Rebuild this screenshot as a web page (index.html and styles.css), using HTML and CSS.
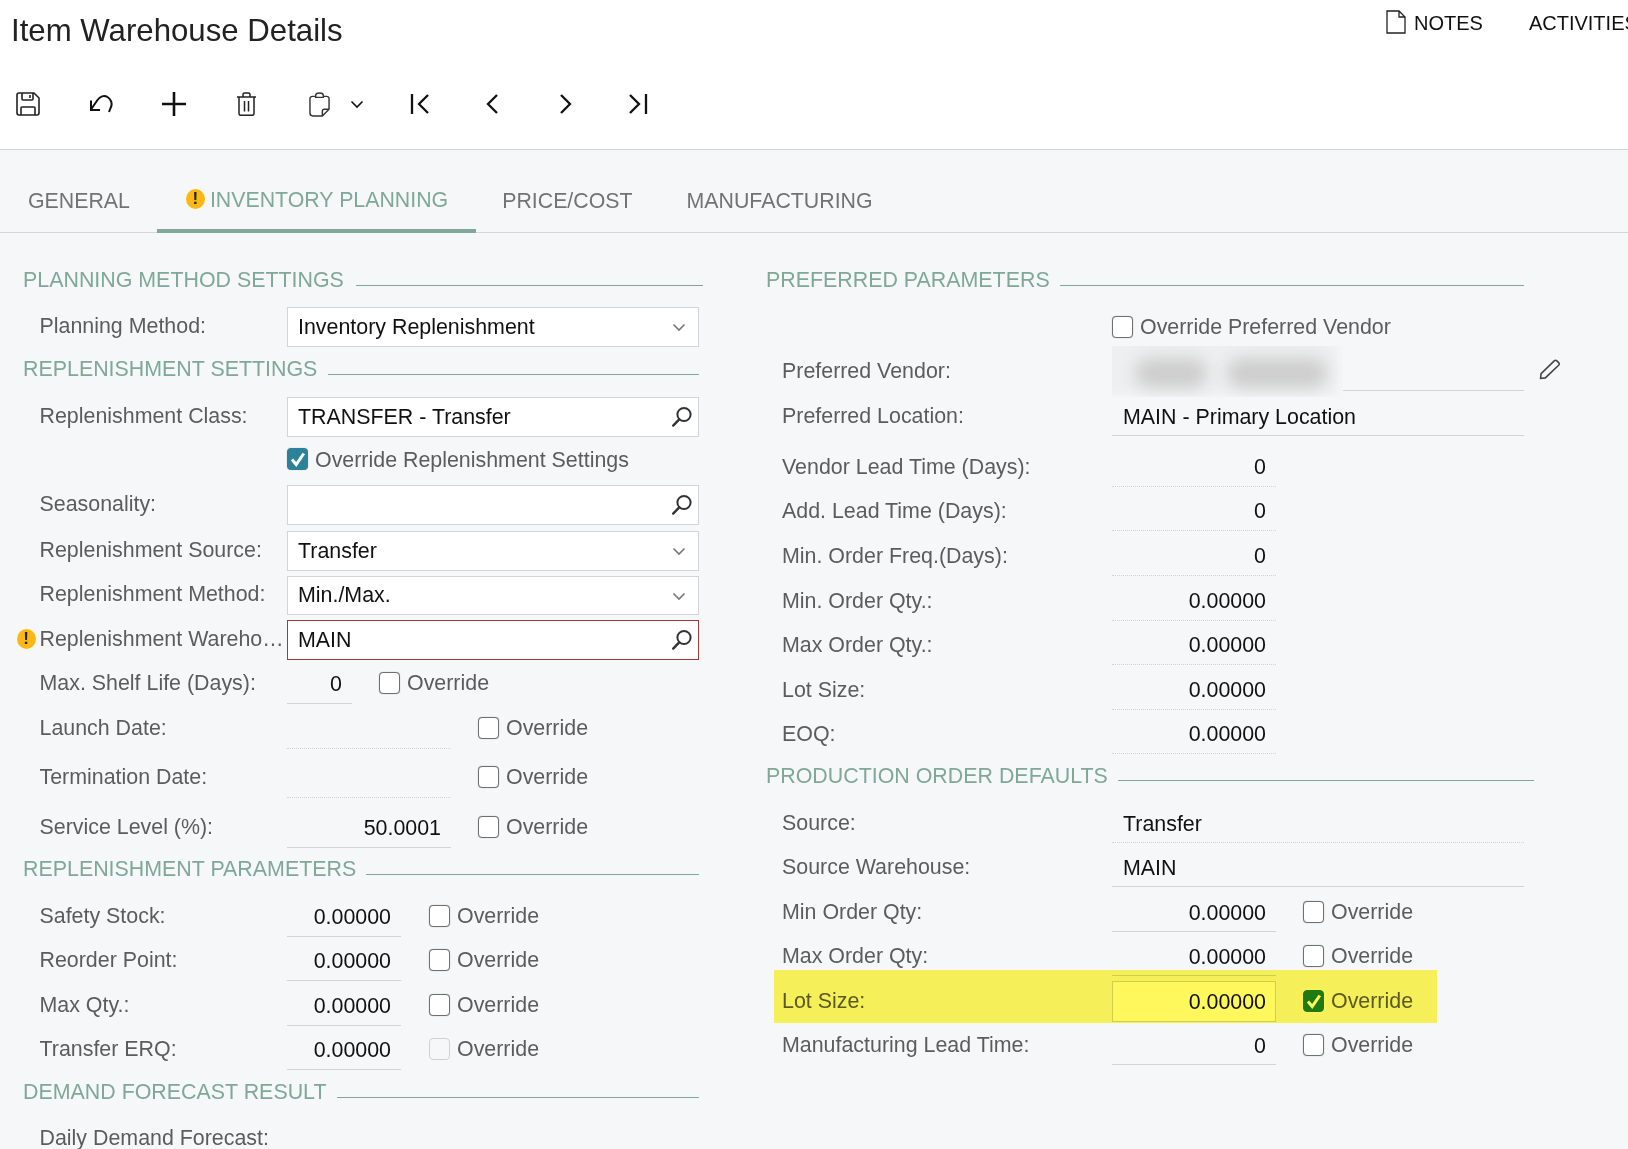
FILE: index.html
```html
<!DOCTYPE html>
<html lang="en">
<head>
<meta charset="utf-8">
<title>Item Warehouse Details</title>
<link rel="stylesheet" href="styles.css">
</head>
<body>
<svg class="defs" width="0" height="0" aria-hidden="true">
  <symbol id="chev" viewBox="0 0 14 9"><path d="M1.5 1.5 7 7l5.5-5.5" fill="none" stroke="currentColor" stroke-width="1.6"/></symbol>
  <symbol id="search" viewBox="0 0 22 22"><circle cx="13" cy="8.5" r="6.6" fill="none" stroke="currentColor" stroke-width="2"/><path d="M8.2 13.4 2.2 19.6" fill="none" stroke="currentColor" stroke-width="2.4" stroke-linecap="round"/></symbol>
  <symbol id="check" viewBox="0 0 22 22"><path d="M5 11.500 9.200 16.500 16.800 5.500" fill="none" stroke="currentColor" stroke-width="3"/></symbol>
</svg>

<header class="header">
  <div class="title-row">
    <h1 class="title">Item Warehouse Details</h1>
    <div class="links">
      <span class="link link-notes">
        <svg class="note-icon" viewBox="0 0 20 24"><path d="M1 1h12l6 6v16H1z M13 1v6h6" fill="#fff" stroke="#222" stroke-width="1.3"/></svg>
        NOTES
      </span>
      <span class="link">ACTIVITIES</span>
    </div>
  </div>
  <div class="toolbar">
    <button class="tool tool-save"><svg viewBox="0 0 24 24" class="ico"><path d="M3 1h15l5 5v15a2 2 0 0 1-2 2H3a2 2 0 0 1-2-2V3a2 2 0 0 1 2-2z M6 1v6a1 1 0 0 0 1 1h9a1 1 0 0 0 1-1V1 M14 3v3 M5 23v-7a1 1 0 0 1 1-1h12a1 1 0 0 1 1 1v7" fill="none" stroke="#222" stroke-width="1.6"/></svg></button>
    <button class="tool"><svg viewBox="0 0 24 24" class="ico"><path d="M2 8.500V18h9M2 17.500 8.500 8C11 4.500 15 3 18.500 5c3.500 2 5 6.500 3.500 10l-2 5" fill="none" stroke="#111" stroke-width="2"/></svg></button>
    <button class="tool"><svg viewBox="0 0 24 24" class="ico"><path d="M12 0v24M0 12h24" fill="none" stroke="#111" stroke-width="2.6"/></svg></button>
    <button class="tool"><svg viewBox="0 0 19 24" class="ico-trash"><path d="M0 5h19M6 5V2.500A1.500 1.500 0 0 1 7.500 1h4A1.500 1.500 0 0 1 13 2.500V5M2 5v16.500A1.800 1.800 0 0 0 3.800 23.300h11.400a1.800 1.800 0 0 0 1.800-1.800V5M7.500 9v10.500M11.500 9v10.500" fill="none" stroke="#222" stroke-width="1.5"/></svg></button>
    <button class="tool tool-clip"><svg viewBox="0 0 22 26" class="ico ico-tall"><path d="M7 4.500H3.500A2.500 2.500 0 0 0 1 7v15a3 3 0 0 0 3 3h10l7-7V7a2.500 2.500 0 0 0-2.500-2.500H15M7 5.500V3.500C7 2 9 1 11 1s4 1 4 2.500v2zM14 25v-5a2 2 0 0 1 2-2h5" fill="none" stroke="#333" stroke-width="1.5"/></svg><svg class="ico-chev"><use href="#chev"/></svg></button>
    <button class="tool tool-nav"><svg viewBox="0 0 20 20" class="ico-nav"><path d="M2 0v20M18 1 9 10l9 9" fill="none" stroke="#111" stroke-width="2.3"/></svg></button>
    <button class="tool tool-nav"><svg viewBox="0 0 20 20" class="ico-nav"><path d="M14 1 5 10l9 9" fill="none" stroke="#111" stroke-width="2.3"/></svg></button>
    <button class="tool tool-nav"><svg viewBox="0 0 20 20" class="ico-nav"><path d="M5 1l9 9-9 9" fill="none" stroke="#111" stroke-width="2.300"/></svg></button>
    <button class="tool tool-nav"><svg viewBox="0 0 20 20" class="ico-nav"><path d="M17 0v20M1 1l9 9-9 9" fill="none" stroke="#111" stroke-width="2.3"/></svg></button>
  </div>
</header>

<nav class="tabs">
  <a class="tab">GENERAL</a>
  <a class="tab tab-active"><span class="warn">!</span>INVENTORY PLANNING</a>
  <a class="tab tab-after">PRICE/COST</a>
  <a class="tab">MANUFACTURING</a>
</nav>

<main class="form">
  <section class="col col-left">
    <div class="head head-first head-wide"><span>PLANNING METHOD SETTINGS</span><i></i></div>
    <div class="row h40"><label class="lbl">Planning Method:</label><div class="box">Inventory Replenishment<svg class="chev"><use href="#chev"/></svg></div></div>

    <div class="head"><span>REPLENISHMENT SETTINGS</span><i></i></div>
    <div class="row h41"><label class="lbl">Replenishment Class:</label><div class="box">TRANSFER - Transfer<svg class="mag"><use href="#search"/></svg></div></div>
    <div class="row h43"><span class="lbl"></span><span class="cb cb-on"><svg><use href="#check"/></svg></span><span class="cbt cbt-low">Override Replenishment Settings</span></div>
    <div class="row h45"><label class="lbl">Seasonality:</label><div class="box"><svg class="mag"><use href="#search"/></svg></div></div>
    <div class="row h46"><label class="lbl">Replenishment Source:</label><div class="box">Transfer<svg class="chev"><use href="#chev"/></svg></div></div>
    <div class="row h44"><label class="lbl">Replenishment Method:</label><div class="box box-short">Min./Max.<svg class="chev"><use href="#chev"/></svg></div></div>
    <div class="row h45"><label class="lbl lbl-warn"><span class="warn warn-lbl">!</span><span class="lbl-cut">Replenishment Warehouse:</span></label><div class="box box-err">MAIN<svg class="mag"><use href="#search"/></svg></div></div>
    <div class="row h44"><label class="lbl">Max. Shelf Life (Days):</label><div class="fld w65">0</div><span class="cb"></span><span class="cbt">Override</span></div>
    <div class="row h45"><label class="lbl">Launch Date:</label><div class="fld w164 dot"></div><span class="cb"></span><span class="cbt">Override</span></div>
    <div class="row h49"><label class="lbl">Termination Date:</label><div class="fld w164 dot"></div><span class="cb"></span><span class="cbt">Override</span></div>
    <div class="row h50"><label class="lbl">Service Level (%):</label><div class="fld w164">50.0001</div><span class="cb"></span><span class="cbt">Override</span></div>

    <div class="head head-mid"><span>REPLENISHMENT PARAMETERS</span><i></i></div>
    <div class="row h40"><label class="lbl">Safety Stock:</label><div class="fld w114">0.00000</div><span class="cb"></span><span class="cbt">Override</span></div>
    <div class="row h44"><label class="lbl">Reorder Point:</label><div class="fld w114">0.00000</div><span class="cb"></span><span class="cbt">Override</span></div>
    <div class="row h45"><label class="lbl">Max Qty.:</label><div class="fld w114">0.00000</div><span class="cb"></span><span class="cbt">Override</span></div>
    <div class="row h44"><label class="lbl">Transfer ERQ:</label><div class="fld w114">0.00000</div><span class="cb cb-off"></span><span class="cbt">Override</span></div>

    <div class="head"><span>DEMAND FORECAST RESULT</span><i></i></div>
    <div class="row h40"><label class="lbl">Daily Demand Forecast:</label></div>
  </section>

  <section class="col col-right">
    <div class="head head-first"><span>PREFERRED PARAMETERS</span><i></i></div>
    <div class="row h40"><span class="lbl"></span><span class="cb"></span><span class="cbt">Override Preferred Vendor</span></div>
    <div class="row h44"><label class="lbl">Preferred Vendor:</label>
      <div class="fld-text vendor"><div class="redact"><b></b><b></b></div></div>
      <svg class="pencil" viewBox="0 0 20 20"><path d="M1.500 18.500 2 14 14.500 1.800a1.800 1.800 0 0 1 2.500 0l1.700 1.700a1.800 1.800 0 0 1 0 2.500L6 18z" fill="none" stroke="#444" stroke-width="1.500"/></svg>
    </div>
    <div class="row h45"><label class="lbl">Preferred Location:</label><div class="fld-text">MAIN - Primary Location</div></div>
    <div class="row h51"><label class="lbl">Vendor Lead Time (Days):</label><div class="fld w164 dot">0</div></div>
    <div class="row h44"><label class="lbl">Add. Lead Time (Days):</label><div class="fld w164 dot">0</div></div>
    <div class="row h45"><label class="lbl">Min. Order Freq.(Days):</label><div class="fld w164 dot">0</div></div>
    <div class="row h45"><label class="lbl">Min. Order Qty.:</label><div class="fld w164 dot">0.00000</div></div>
    <div class="row h44"><label class="lbl">Max Order Qty.:</label><div class="fld w164 dot">0.00000</div></div>
    <div class="row h45"><label class="lbl">Lot Size:</label><div class="fld w164 dot">0.00000</div></div>
    <div class="row h44"><label class="lbl">EOQ:</label><div class="fld w164 dot">0.00000</div></div>

    <div class="head head-prod"><span>PRODUCTION ORDER DEFAULTS</span><i></i></div>
    <div class="row h40"><label class="lbl">Source:</label><div class="fld-text fld-low dot">Transfer</div></div>
    <div class="row h44"><label class="lbl">Source Warehouse:</label><div class="fld-text fld-low">MAIN</div></div>
    <div class="row h45"><label class="lbl">Min Order Qty:</label><div class="fld w164 fld-low">0.00000</div><span class="cb"></span><span class="cbt">Override</span></div>
    <div class="row h44"><label class="lbl">Max Order Qty:</label><div class="fld w164 fld-low">0.00000</div><span class="cb"></span><span class="cbt">Override</span></div>
    <div class="row h45 row-lit"><label class="lbl">Lot Size:</label><div class="fld w164 fld-lit">0.00000</div><span class="cb cb-green"><svg><use href="#check"/></svg></span><span class="cbt">Override</span><div class="marker"></div></div>
    <div class="row h44"><label class="lbl">Manufacturing Lead Time:</label><div class="fld w164 fld-low">0</div><span class="cb"></span><span class="cbt">Override</span></div>
  </section>
</main>
</body>
</html>
```
FILE: styles.css
```css
* { box-sizing: border-box; }
html, body { margin: 0; height: 100%; overflow: hidden; }
body {
  width: 1628px;
  height: 1149px;
  background: #f5f7f9;
  font-family: "Liberation Sans", Arial, sans-serif;
  font-size: 21.4px;
  color: #111;
}
.defs { position: absolute; }

/* header */
.header { height: 150px; background: #fff; border-bottom: 1px solid #d4d6d8; }
.title-row { height: 62px; display: flex; }
.title {
  flex: 0 0 1386px;
  margin: 0;
  padding: 11px 0 0 11px;
  font-size: 31.2px;
  font-weight: 400;
  line-height: 40px;
  color: #222;
}
.links { display: flex; flex: 0 0 auto; gap: 46px; padding-top: 11px; font-size: 20px; line-height: 24px; color: #111; }
.link { display: flex; gap: 8px; white-space: nowrap; }
.link-notes { margin-top: -1px; line-height: 26px; }
.note-icon { width: 20px; height: 24px; }

.toolbar { display: flex; align-items: center; height: 84px; padding: 0 0 0 6px; }
.tool {
  flex: 0 0 44px;
  height: 44px;
  margin-right: 29px;
  padding: 0;
  border: 0;
  background: none;
  display: flex;
  align-items: center;
  justify-content: center;
}
.tool-clip { flex: 0 0 66px; justify-content: flex-start; margin-right: 34px; padding-left: 11px; gap: 20px; }
.tool-nav { margin-right: 29px; }
.ico { width: 24px; height: 24px; display: block; }
.ico-tall { width: 21px; height: 25px; }
.ico-trash { width: 19px; height: 24px; display: block; margin-left: -2px; }
.ico-chev { width: 14px; height: 9px; color: #111; }
.ico-nav { width: 20px; height: 20px; display: block; }

/* tabs */
.tabs { display: flex; height: 83px; padding-left: 1px; border-bottom: 1px solid #d4d6d8; color: #737373; font-size: 21.33px; }
.tab { display: flex; align-items: center; padding: 20px 27px 0; height: 83px; white-space: nowrap; }
.tab-active {
  padding: 21px 28px 0 29px;
  color: #7fa896;
  border-bottom: 4px solid #7fa896;
  gap: 5px;
}
.tab-after { padding-left: 26px; padding-right: 27px; }
.tab-active .warn { margin-top: -2px; }
.warn {
  flex: 0 0 19px;
  width: 19px;
  height: 20px;
  border-radius: 50%;
  background: #fdb813;
  color: #222;
  font-size: 17px;
  font-weight: 700;
  line-height: 20px;
  text-align: center;
}

/* form */
.form {
  display: grid;
  grid-template-columns: 676px 758px;
  column-gap: 67px;
  padding: 0 0 0 23px;
}
.col { min-width: 0; }
.head {
  display: flex;
  height: 26px;
  margin: 8px 0 15px;
  color: #7fa896;
  line-height: 29px;
  white-space: nowrap;
  gap: 11px;
}
.head i { flex: 1; height: 1px; margin-top: 19px; background: #7fa896; }
.head-first { margin-top: 33px; }
.head-wide { margin-right: -4px; gap: 12px; }
.head-mid { margin: 7px 0 16px; gap: 10px; }
.col-right .head { gap: 10px; }
.head-prod { margin-right: -10px; }
.head-prod i { margin-top: 18px; }

.row { display: flex; align-items: flex-end; position: relative; }
.h40 { height: 40px; }
.h41 { height: 41px; }
.h43 { height: 43px; }
.h44 { height: 44px; }
.h45 { height: 45px; }
.h46 { height: 46px; }
.h49 { height: 49px; }
.h50 { height: 50px; }
.h51 { height: 51px; }

.lbl {
  flex: 0 0 264px;
  min-width: 0;
  height: 40px;
  padding-left: 16.5px;
  line-height: 39px;
  color: #5c5c5c;
  white-space: nowrap;
}
.col-right .lbl { flex-basis: 346px; padding-left: 16px; line-height: 40px; }
.lbl-warn { display: flex; }
.warn-lbl { margin: 9px 4px 0 -23px; }
.lbl-cut { flex: 1; min-width: 0; overflow: hidden; text-overflow: ellipsis; padding-right: 3px; }

.box {
  position: relative;
  flex: 0 0 412px;
  height: 40px;
  padding-left: 10px;
  border: 1px solid #d2d4d6;
  background: #fff;
  line-height: 39px;
  white-space: nowrap;
}
.box-short { height: 39px; line-height: 37px; }
.box-err { border-color: #a33a3a; }
.chev { position: absolute; right: 12px; top: 15px; width: 14px; height: 9px; color: #777; }
.mag { position: absolute; right: 5px; top: 8px; width: 22px; height: 22px; color: #333; }

.fld {
  height: 40px;
  padding-right: 10px;
  border-bottom: 1px solid #d2d4d6;
  line-height: 40px;
  text-align: right;
  margin-right: 27px;
}
.w65 { flex: 0 0 65px; }
.w114 { flex: 0 0 114px; margin-right: 28px; }
.w164 { flex: 0 0 164px; }
.dot { border-bottom: 1px dotted #d2d4d6; }
.fld-low { line-height: 42px; }
.fld-lit {
  height: 41px;
  margin-bottom: -1px;
  border: 1px solid #d2d4d6;
  background: #fff;
  line-height: 40px;
  padding-right: 9px;
}

.fld-text {
  flex: 0 0 412px;
  height: 40px;
  padding-left: 11px;
  border-bottom: 1px solid #d2d4d6;
  line-height: 42px;
}
.fld-text.dot { border-bottom-style: dotted; }

.cb {
  flex: 0 0 21px;
  width: 21px;
  height: 22px;
  margin-bottom: 9px;
  border: 1px solid #6e7072;
  border-radius: 4px;
  background: #fff;
  box-shadow: 0 0 1px rgba(0, 0, 0, .4);
}
.col-left .cb { margin-bottom: 10px; }
.cb svg { display: block; width: 22px; height: 22px; margin: -1px; }
.cb-on { background: #2b8299; border-color: #2b8299; color: #fff; }
.col-left .cb-off { border-color: #cfd1d3; background: #f5f7f9; box-shadow: none; }
.cb-green { background: #1f7d34; border-color: #1f7d34; color: #fff; box-shadow: 0 0 3px 1px #fffbe0; }
.cbt { height: 40px; margin-left: 7px; line-height: 39px; color: #5c5c5c; white-space: nowrap; }
.col-right .cbt, .cbt-low { line-height: 41px; }

.vendor { position: relative; }
.redact {
  position: absolute;
  left: 0;
  top: -5px;
  width: 231px;
  height: 51px;
  display: flex;
  gap: 20px;
  padding: 12px 0 0 23px;
  background: #eeeff0;
  box-shadow: inset -10px -6px 12px -4px #f5f7f9;
  overflow: hidden;
}
.redact b { display: block; height: 30px; background: #cdcdcd; border-radius: 15px; filter: blur(8px); }
.redact b:first-child { width: 72px; }
.redact b:last-child { width: 100px; }
.pencil { position: absolute; left: 773px; top: 12px; width: 21px; height: 21px; }

.marker {
  position: absolute;
  left: 8px;
  top: -6px;
  width: 663px;
  height: 53px;
  background: #fff85c;
  mix-blend-mode: multiply;
  pointer-events: none;
}
```
